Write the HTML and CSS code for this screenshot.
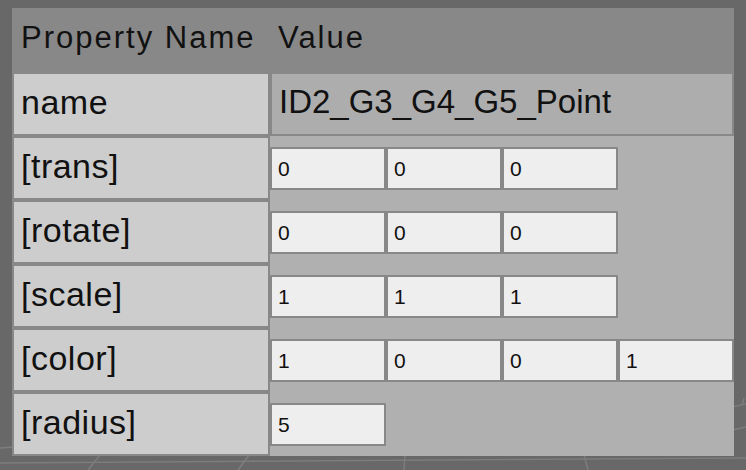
FILE: index.html
```html
<!DOCTYPE html>
<html lang="en">
<head>
<meta charset="utf-8">
<title>Property Inspector</title>
<link rel="stylesheet" href="styles.css">
</head>
<body>
<svg class="scene" width="746" height="470" viewBox="0 0 746 470" aria-hidden="true">
  <g stroke="#7d7d7d" stroke-width="1.5" fill="none">
    <line x1="0" y1="448" x2="14" y2="447"/>
    <line x1="0" y1="463" x2="746" y2="458"/>
    <line x1="88" y1="470" x2="100" y2="455"/>
    <line x1="238" y1="470" x2="249" y2="455"/>
    <line x1="404" y1="470" x2="405" y2="455"/>
    <line x1="588" y1="470" x2="584" y2="455"/>
    <line x1="732" y1="407" x2="746" y2="404"/>
    <line x1="732" y1="430" x2="746" y2="427"/>
    <line x1="742" y1="405" x2="744" y2="398"/>
  </g>
</svg>
<div class="panel">
  <div class="head">
    <div class="hcell hname">Property Name</div>
    <div class="hcell hvalue">Value</div>
  </div>
  <div class="body">
    <div class="labels">
      <div class="label">name</div>
      <div class="label">[trans]</div>
      <div class="label">[rotate]</div>
      <div class="label">[scale]</div>
      <div class="label">[color]</div>
      <div class="label">[radius]</div>
    </div>
    <div class="values">
      <div class="namecell">ID2_G3_G4_G5_Point</div>
      <div class="fields">
        <div class="frow">
          <input class="field" type="text" value="0" readonly>
          <input class="field" type="text" value="0" readonly>
          <input class="field" type="text" value="0" readonly>
        </div>
        <div class="frow">
          <input class="field" type="text" value="0" readonly>
          <input class="field" type="text" value="0" readonly>
          <input class="field" type="text" value="0" readonly>
        </div>
        <div class="frow">
          <input class="field" type="text" value="1" readonly>
          <input class="field" type="text" value="1" readonly>
          <input class="field" type="text" value="1" readonly>
        </div>
        <div class="frow">
          <input class="field" type="text" value="1" readonly>
          <input class="field" type="text" value="0" readonly>
          <input class="field" type="text" value="0" readonly>
          <input class="field" type="text" value="1" readonly>
        </div>
        <div class="frow">
          <input class="field" type="text" value="5" readonly>
        </div>
      </div>
    </div>
  </div>
</div>
</body>
</html>
```
FILE: styles.css
```css
html, body {
  margin: 0;
  padding: 0;
}

body {
  width: 746px;
  height: 470px;
  background: #686868;
  font-family: "Liberation Sans", Arial, sans-serif;
  color: #111;
  position: relative;
  overflow: hidden;
}

.scene {
  position: absolute;
  left: 0;
  top: 0;
  z-index: 0;
}

.panel {
  position: relative;
  z-index: 1;
  margin: 8px 0 0 12px;
  width: 722px;
  height: 448px;
  box-sizing: border-box;
  padding-left: 2px;
  background: #888888;
  display: flex;
  flex-direction: column;
}

.head {
  height: 66px;
  display: flex;
  box-sizing: border-box;
  padding-top: 10px;
}

.hcell {
  font-size: 31px;
  line-height: 40px;
  letter-spacing: 2px;
  color: #111;
}

.hname {
  width: 258px;
  box-sizing: border-box;
  padding-left: 7px;
}

.hvalue {
  padding-left: 6px;
}

.body {
  display: flex;
  gap: 2px;
  flex: 1;
}

.labels {
  width: 254px;
  display: flex;
  flex-direction: column;
  gap: 4px;
}

.label {
  height: 60px;
  background: #cdcdcd;
  font-size: 34px;
  line-height: 56px;
  letter-spacing: 0.5px;
  padding-left: 7px;
  color: #111;
}

.values {
  width: 464px;
  display: flex;
  flex-direction: column;
}

.namecell {
  height: 60px;
  border: 2px solid #888888;
  border-top: 0;
  background: #adadad;
  font-size: 33px;
  line-height: 56px;
  padding-left: 7px;
  color: #111;
}

.fields {
  flex: 1;
  background: #b0b0b0;
  display: flex;
  flex-direction: column;
}

.frow {
  height: 64px;
  box-sizing: border-box;
  padding-top: 11px;
  display: flex;
}

.field {
  width: 116px;
  height: 43px;
  box-sizing: border-box;
  margin: 0;
  border: 2px solid #888888;
  border-radius: 0;
  background: #eeeeee;
  padding: 0 0 0 6px;
  font-family: "Liberation Sans", Arial, sans-serif;
  font-size: 21px;
  color: #111;
  outline: none;
}
```
